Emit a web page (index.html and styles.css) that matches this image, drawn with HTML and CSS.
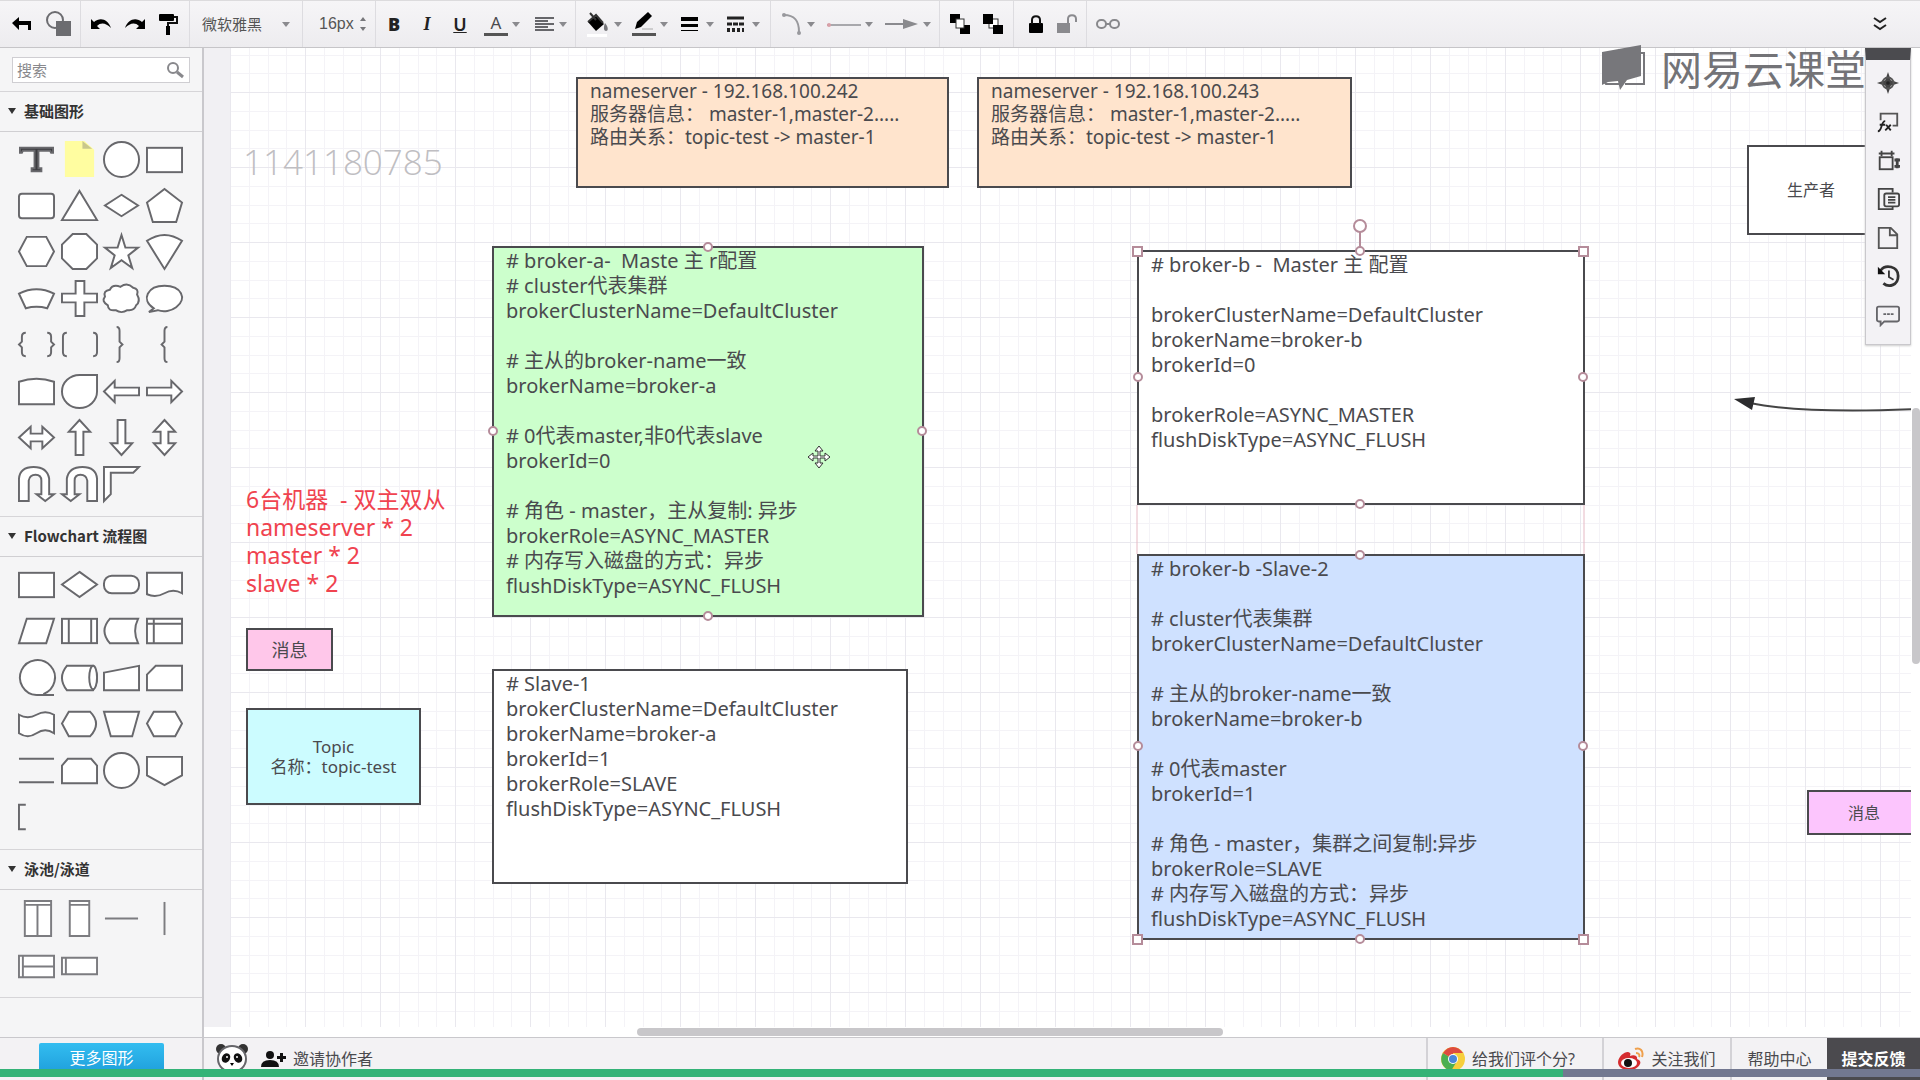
FILE: index.html
```html
<!DOCTYPE html>
<html lang="zh-CN">
<head>
<meta charset="utf-8">
<title>流程图编辑器</title>
<link rel="stylesheet" href="styles.css">
</head>
<body>
<header class="toolbar">
  <div class="group group-file">
    <button aria-label="返回"><svg width="20" height="20" viewBox="0 0 20 20"><path d="M0 9l7-6v4h12v9h-3v-5H7v5z"/></svg></button>
    <button aria-label="图形"><svg width="26" height="26" viewBox="0 0 26 26"><rect x="10" y="10" width="15" height="15" fill="#6c6c70"/><circle cx="9" cy="9" r="8" fill="none" stroke="#6c6c70" stroke-width="2"/></svg></button>
  </div>
  <div class="group group-history">
    <button aria-label="撤销"><svg width="20" height="20" viewBox="0 0 20 20"><path d="M0 5v10h9l-3-3c4-4 9-3 14 2C17 5 9 3 3 8z"/></svg></button>
    <button aria-label="重做"><svg width="20" height="20" viewBox="0 0 20 20"><path d="M20 5v10h-9l3-3C10 8 5 9 0 14 3 5 11 3 17 8z"/></svg></button>
    <button aria-label="格式刷"><svg width="20" height="22" viewBox="0 0 20 22"><rect x="0" y="1" width="15" height="7" rx="1"/><path d="M15 4h3v6H9v3" fill="none" stroke="#111" stroke-width="2"/><rect x="7" y="13" width="4" height="9"/></svg></button>
  </div>
  <div class="group group-font">
    <select aria-label="字体"><option>微软雅黑</option></select>
    <i class="caret"></i>
  </div>
  <div class="group group-size">
    <input aria-label="字号" value="16px">
    <svg width="8" height="16" viewBox="0 0 8 16" fill="#77777b"><path d="M1 5l3-4 3 4zM1 11l3 4 3-4z"/></svg>
  </div>
  <div class="group group-text">
    <button class="glyph bold" aria-label="加粗">B</button>
    <button class="glyph italic" aria-label="倾斜">I</button>
    <button class="glyph under" aria-label="下划线">U</button>
    <button class="drop" aria-label="文字颜色"><span class="letter">A</span><i class="caret"></i></button>
    <button class="drop" aria-label="对齐"><svg width="20" height="16" viewBox="0 0 20 16" stroke="#66666a" stroke-width="2"><path d="M0 2h19M0 5h13M0 8h19M0 11h13M0 14h19"/></svg><i class="caret"></i></button>
  </div>
  <div class="group group-line">
    <button class="drop" aria-label="填充"><svg width="24" height="26" viewBox="0 0 24 26"><path d="M2 11l8-6 8 8-8 7z"/><path d="M2 11L10 4l7 8M4 2l6 7" fill="none" stroke="#333" stroke-width="2"/><path d="M19 12c4 5 3 8 1 8s-3-3-1-8z" fill="#77777b"/><path d="M1 23h20v3H1z" fill="#fff"/></svg><i class="caret"></i></button>
    <button class="drop" aria-label="线条颜色"><svg width="24" height="26" viewBox="0 0 24 26"><path d="M3 18l2-7L16 1l4 4L9 16z"/><path d="M10 18h11" stroke="#aaa"/><path d="M0 22h24v3H0z" fill="#555"/></svg><i class="caret"></i></button>
    <button class="drop" aria-label="线宽"><svg width="24" height="18" viewBox="0 0 24 18"><path d="M3 2h17v4H3zM3 9h17v3H3zM3 15h17v1H3z"/></svg><i class="caret"></i></button>
    <button class="drop" aria-label="线型"><svg width="24" height="18" viewBox="0 0 24 18" stroke="#222" fill="none"><path d="M3 3h17" stroke-width="3"/><path d="M3 9h17" stroke-width="3" stroke-dasharray="5 1"/><path d="M3 15h17" stroke-width="4" stroke-dasharray="3 2"/></svg><i class="caret"></i></button>
  </div>
  <div class="group group-link">
    <button class="drop" aria-label="连线类型" disabled><svg width="22" height="24" viewBox="0 0 22 24" fill="#99999d"><path d="M3 3C14 3 18 9 18 20" fill="none" stroke="#99999d" stroke-width="2"/><circle cx="3" cy="3" r="2"/><circle cx="18" cy="21" r="2"/></svg><i class="caret"></i></button>
    <button class="drop" aria-label="起点" disabled><svg width="34" height="8" viewBox="0 0 34 8"><path d="M0 5h34" stroke="#a8a8ac" stroke-width="2"/><circle cx="2" cy="5" r="2" fill="#d9a0a8"/></svg><i class="caret"></i></button>
    <button class="drop" aria-label="终点" disabled><svg width="34" height="12" viewBox="0 0 34 12" fill="#8a8a8e"><path d="M0 6h20" stroke="#8a8a8e" stroke-width="2"/><path d="M18 1l15 5-15 5z"/></svg><i class="caret"></i></button>
  </div>
  <div class="group group-layer">
    <button aria-label="置于顶层"><svg width="20" height="22" viewBox="0 0 20 22"><path d="M0 1h10v9H0zM10 12h10v9H10z"/><rect x="6" y="6" width="8" height="9" fill="#fff" stroke="#333"/></svg></button>
    <button aria-label="置于底层"><svg width="20" height="22" viewBox="0 0 20 22"><rect x="6" y="6" width="9" height="9" fill="#fff" stroke="#333"/><path d="M0 1h10v10H0zM10 12h10v9H10z"/></svg></button>
  </div>
  <div class="group group-lock">
    <button aria-label="锁定"><svg width="16" height="20" viewBox="0 0 16 20"><rect x="1" y="9" width="14" height="10" rx="1"/><path d="M4 10V6c0-5 8-5 8 0v4" fill="none" stroke="#111" stroke-width="2"/></svg></button>
    <button aria-label="解锁" disabled><svg width="22" height="20" viewBox="0 0 22 20"><rect x="1" y="9" width="13" height="10" fill="#8a8a8e"/><path d="M12 10V5c0-5 8-5 8 0v3" fill="none" stroke="#8a8a8e" stroke-width="2"/></svg></button>
  </div>
  <div class="group group-chain">
    <button aria-label="链接"><svg width="24" height="12" viewBox="0 0 24 12" fill="none" stroke="#88888c" stroke-width="2"><rect x="1" y="2" width="9" height="8" rx="4"/><rect x="14" y="2" width="9" height="8" rx="4"/><path d="M9 6h6"/></svg></button>
  </div>
  <button class="collapse" aria-label="收起"><svg width="14" height="16" viewBox="0 0 14 16" fill="none" stroke="#222" stroke-width="2"><path d="M1 2l6 4 6-4M1 9l6 4 6-4"/></svg></button>
</header>

<main class="main">
  <aside class="sidebar">
    <div class="search">
      <input type="text" placeholder="搜索" aria-label="搜索">
      <svg width="18" height="18" viewBox="0 0 18 18" fill="none" stroke="#88888c"><circle cx="7" cy="7" r="5" stroke-width="2"/><path d="M11 11l6 5" stroke-width="3"/></svg>
    </div>
    <h2 class="section-title"><i class="fold"></i>基础图形</h2>
    <div class="shapes shapes-basic">
      <button aria-label="文本"><svg viewBox="0 0 38 38"><path d="M2 7h34v5h-2l-1-2H21v18h3v3H14v-3h3V10H5l-1 2H2z" fill="#3c3c40"/></svg></button>
      <button aria-label="便签"><svg class="sticky" viewBox="0 0 38 38"><path d="M4 0h20l10 9v28H4z" fill="#fffda0"/><path d="M22 0l10 8H22z" fill="#c9c78c"/></svg></button>
      <button aria-label="圆形"><svg viewBox="0 0 38 38"><circle cx="19" cy="19" r="18"/></svg></button>
      <button aria-label="矩形"><svg viewBox="0 0 38 38"><rect x="1" y="7" width="36" height="25"/></svg></button>
      <button aria-label="圆角矩形"><svg viewBox="0 0 38 38"><rect x="1" y="7" width="36" height="25" rx="3"/></svg></button>
      <button aria-label="三角形"><svg viewBox="0 0 38 38"><path d="M19 4l18 30H1z"/></svg></button>
      <button aria-label="菱形"><svg viewBox="0 0 38 38"><path d="M19 8l17 11-17 11L2 19z"/></svg></button>
      <button aria-label="五边形"><svg viewBox="0 0 38 38"><path d="M19 2l18 14-6 20H7L1 16z"/></svg></button>
      <button aria-label="六边形"><svg viewBox="0 0 38 38"><path d="M9 4h20l8 15-8 15H9L1 19z"/></svg></button>
      <button aria-label="八边形"><svg viewBox="0 0 38 38"><path d="M12 1h14l11 11v14L26 37H12L1 26V12z"/></svg></button>
      <button aria-label="星形"><svg viewBox="0 0 38 38"><path d="M19 2l4 13h13L26 23l4 13-11-8-11 8 4-13L2 15h13z"/></svg></button>
      <button aria-label="扇形"><svg viewBox="0 0 38 38"><path d="M1 8Q19-4 37 8L19 37z"/></svg></button>
      <button aria-label="弧形"><svg viewBox="0 0 38 38"><path d="M1 14Q19 5 37 14l-7 15q-11-3-22 0z"/></svg></button>
      <button aria-label="十字"><svg viewBox="0 0 38 38"><path d="M15 1h9v13h13v9H24v14h-9V23H1v-9h14z"/></svg></button>
      <button aria-label="云"><svg viewBox="0 0 38 38"><path d="M7 10q3-6 11-3 7-5 13 1 6 1 4 7 4 7-1 11-2 6-9 5-6 4-12 0-8 1-8-5-7-4-3-9-2-6 5-7z"/></svg></button>
      <button aria-label="对话"><svg viewBox="0 0 38 38"><path d="M8 29C-6 20 2 6 19 6s24 13 12 22c-5 4-13 5-19 3l-9 2z"/></svg></button>
      <button aria-label="大括号"><svg class="open" viewBox="0 0 38 38"><path d="M8 7q-4 0-4 4v5l-3 3 3 3v5q0 4 4 4M30 7q4 0 4 4v5l3 3-3 3v5q0 4-4 4"/></svg></button>
      <button aria-label="中括号"><svg class="open" viewBox="0 0 38 38"><path d="M6 7q-4 0-4 4v16q0 4 4 4M33 7q4 0 4 4v16q0 4-4 4"/></svg></button>
      <button aria-label="右大括号"><svg class="open" viewBox="0 0 38 38"><path d="M14 1q3 0 3 4v11l3 3-3 3v11q0 4-3 4"/></svg></button>
      <button aria-label="左大括号"><svg class="open" viewBox="0 0 38 38"><path d="M22 1q-3 0-3 4v11l-3 3 3 3v11q0 4 3 4"/></svg></button>
      <button aria-label="拱形"><svg viewBox="0 0 38 38"><path d="M1 9Q19 3 37 9v23H1z"/></svg></button>
      <button aria-label="水滴"><svg viewBox="0 0 38 38"><path d="M19 2h18v17A18 17 0 1 1 19 2z"/></svg></button>
      <button aria-label="左箭头"><svg viewBox="0 0 38 38"><path d="M1 19L12 8v7h25v8H12v7z"/></svg></button>
      <button aria-label="右箭头"><svg viewBox="0 0 38 38"><path d="M37 19L26 8v7H1v8h25v7z"/></svg></button>
      <button aria-label="左右箭头"><svg viewBox="0 0 38 38"><path d="M1 19L13 8v7h12V8l12 11-12 11v-7H13v7z"/></svg></button>
      <button aria-label="上箭头"><svg viewBox="0 0 38 38"><path d="M19 1l11 12h-7v24h-8V13H8z"/></svg></button>
      <button aria-label="下箭头"><svg viewBox="0 0 38 38"><path d="M19 37L8 25h7V1h8v24h7z"/></svg></button>
      <button aria-label="上下箭头"><svg viewBox="0 0 38 38"><path d="M19 1l11 12h-7v12h7L19 37 8 25h7V13H8z"/></svg></button>
      <button aria-label="右转箭头"><svg viewBox="0 0 38 38"><path d="M1 37V14Q2 2 16 2t16 12v16h5l-9 7-9-7h5V16q0-6-6-6t-7 6v21z"/></svg></button>
      <button aria-label="左转箭头"><svg viewBox="0 0 38 38"><path d="M37 37V14Q36 2 22 2T6 14v16H1l9 7 9-7h-5V16q0-6 6-6t7 6v21z"/></svg></button>
      <button aria-label="折角"><svg viewBox="0 0 38 38"><path d="M1 2h36l-6 6H8v22l-7 7z"/></svg></button>
    </div>
    <h2 class="section-title"><i class="fold"></i>Flowchart 流程图</h2>
    <div class="shapes shapes-flow">
      <button aria-label="流程"><svg viewBox="0 0 38 38"><rect x="1" y="7" width="36" height="25"/></svg></button>
      <button aria-label="判定"><svg viewBox="0 0 38 38"><path d="M19 6l18 13-18 13L1 19z"/></svg></button>
      <button aria-label="开始"><svg viewBox="0 0 38 38"><rect x="1" y="10" width="36" height="18" rx="8"/></svg></button>
      <button aria-label="文档"><svg viewBox="0 0 38 38"><path d="M1 7h36v21q-9-5-18 0t-18 1z"/></svg></button>
      <button aria-label="数据"><svg viewBox="0 0 38 38"><path d="M9 7h28l-8 25H1z"/></svg></button>
      <button aria-label="子流程"><svg viewBox="0 0 38 38"><rect x="1" y="7" width="36" height="25"/><path d="M8 7v25M31 7v25"/></svg></button>
      <button aria-label="外部数据"><svg viewBox="0 0 38 38"><path d="M7 7h29q-6 12 0 25H7Q-4 19 7 7z"/></svg></button>
      <button aria-label="内部存储"><svg viewBox="0 0 38 38"><path d="M1 7h36v25H1zM1 12h36M8 7v25"/></svg></button>
      <button aria-label="队列数据"><svg viewBox="0 0 38 38"><path d="M19 37h18M19 37A18 18 0 1 1 26 36"/></svg></button>
      <button aria-label="数据库"><svg viewBox="0 0 38 38"><path d="M6 7h27q8 12 0 25H6Q-4 19 6 7z"/><ellipse cx="33" cy="19" rx="4" ry="12"/></svg></button>
      <button aria-label="人工输入"><svg viewBox="0 0 38 38"><path d="M1 14l36-7v25H1z"/></svg></button>
      <button aria-label="卡片"><svg viewBox="0 0 38 38"><path d="M10 7h27v25H1V16z"/></svg></button>
      <button aria-label="条带"><svg viewBox="0 0 38 38"><path d="M1 10q9 5 18 0t18 0v19q-9-6-18 0t-18 0z"/></svg></button>
      <button aria-label="展示内容"><svg viewBox="0 0 38 38"><path d="M8 7h22q12 12 0 25H8L1 19z"/></svg></button>
      <button aria-label="人工操作"><svg viewBox="0 0 38 38"><path d="M1 7h36l-7 25H8z"/></svg></button>
      <button aria-label="预备"><svg viewBox="0 0 38 38"><path d="M8 7h22l7 12-7 13H8L1 19z"/></svg></button>
      <button aria-label="并行模式"><svg class="open" viewBox="0 0 38 38"><path d="M1 7h36M1 31h36"/></svg></button>
      <button aria-label="循环界限"><svg viewBox="0 0 38 38"><path d="M7 7h24l6 7v18H1V14z"/></svg></button>
      <button aria-label="页面内引用"><svg viewBox="0 0 38 38"><circle cx="19" cy="19" r="18"/></svg></button>
      <button aria-label="跨页引用"><svg viewBox="0 0 38 38"><path d="M1 5h36v19L19 34 1 24z"/></svg></button>
      <button aria-label="注释"><svg class="open" viewBox="0 0 38 38"><path d="M8 7H1v25h7"/></svg></button>
    </div>
    <h2 class="section-title"><i class="fold"></i>泳池/泳道</h2>
    <div class="shapes shapes-lane">
      <button aria-label="垂直泳池"><svg viewBox="0 0 38 38"><path d="M7 1h27v36H7zM7 5h27M20 5v32"/></svg></button>
      <button aria-label="垂直泳道"><svg viewBox="0 0 38 38"><path d="M9 1h20v36H9zM9 5h20"/></svg></button>
      <button aria-label="水平分隔"><svg class="open" viewBox="0 0 38 38"><path d="M2 19h34"/></svg></button>
      <button aria-label="垂直分隔"><svg class="open" viewBox="0 0 38 38"><path d="M19 2v34"/></svg></button>
      <button aria-label="水平泳池"><svg viewBox="0 0 38 38"><path d="M1 8h36v22H1zM5 8v22M5 19h32"/></svg></button>
      <button aria-label="水平泳道"><svg viewBox="0 0 38 38"><path d="M1 10h36v17H1zM5 10v17"/></svg></button>
    </div>
  </aside>

  <section class="workspace">
    <div class="sheet">
      <div class="node server ns1">nameserver - 192.168.100.242
服务器信息： master-1,master-2.....
路由关系：topic-test -&gt; master-1</div>
      <div class="node server ns2">nameserver - 192.168.100.243
服务器信息： master-1,master-2.....
路由关系：topic-test -&gt; master-1</div>
      <div class="node broker broker-a"># broker-a-  Maste 主 r配置
# cluster代表集群
brokerClusterName=DefaultCluster

# 主从的broker-name一致
brokerName=broker-a

# 0代表master,非0代表slave
brokerId=0

# 角色 - master，主从复制: 异步
brokerRole=ASYNC_MASTER
# 内存写入磁盘的方式：异步
flushDiskType=ASYNC_FLUSH</div>
      <div class="node broker slave-a"># Slave-1
brokerClusterName=DefaultCluster
brokerName=broker-a
brokerId=1
brokerRole=SLAVE
flushDiskType=ASYNC_FLUSH</div>
      <div class="node broker broker-b"># broker-b -  Master 主 配置

brokerClusterName=DefaultCluster
brokerName=broker-b
brokerId=0

brokerRole=ASYNC_MASTER
flushDiskType=ASYNC_FLUSH</div>
      <div class="node broker slave-b"># broker-b -Slave-2

# cluster代表集群
brokerClusterName=DefaultCluster

# 主从的broker-name一致
brokerName=broker-b

# 0代表master
brokerId=1

# 角色 - master，集群之间复制:异步
brokerRole=SLAVE
# 内存写入磁盘的方式：异步
flushDiskType=ASYNC_FLUSH</div>
      <div class="note">6台机器  - 双主双从
nameserver * 2
master * 2
slave * 2</div>
      <div class="node small message">消息</div>
      <div class="node small topic">Topic
名称：topic-test</div>
      <div class="node small producer">生产者</div>
      <div class="node small outgoing">消息</div>
      <div class="user-id">1141180785</div>
      <svg class="overlay">
        <path d="M1520 355Q1572 366 1690 361" fill="none" stroke="#444" stroke-width="2"/>
        <path d="M1504 351l21-2-3 13z" fill="#2c2c2e"/>
        <path d="M907 457v49M1354 457v49" fill="none" stroke="#e6b9c4"/>
        <g fill="#fff" stroke="#b58c9a" stroke-width="2">
          <path d="M1130 184v15"/>
          <circle cx="1130" cy="178" r="6"/>
          <circle cx="478" cy="199" r="4"/><circle cx="263" cy="383" r="4"/><circle cx="692" cy="383" r="4"/><circle cx="478" cy="568" r="4"/>
          <circle cx="1130" cy="203" r="4"/><circle cx="908" cy="329" r="4"/><circle cx="1353" cy="329" r="4"/><circle cx="1130" cy="456" r="4"/>
          <circle cx="1130" cy="507" r="4"/><circle cx="908" cy="698" r="4"/><circle cx="1353" cy="698" r="4"/><circle cx="1130" cy="891" r="4"/>
          <rect x="903" y="199" width="9" height="9"/><rect x="1349" y="199" width="9" height="9"/>
          <rect x="903" y="887" width="9" height="9"/><rect x="1349" y="887" width="9" height="9"/>
        </g>
        <path d="M589 398l4 5h-3v5h5v-3l5 4-5 4v-3h-5v5h3l-4 5-4-5h3v-5h-5v3l-5-4 5-4v3h5v-5h-3z" fill="#fff" stroke="#333"/>
      </svg>
    </div>
    <div class="scroll-y"></div>
    <div class="scroll-x"></div>
    <div class="brand">
      <svg width="46" height="46" viewBox="0 0 46 46"><path d="M36 9h7v31H24M3 37l2 3h16" fill="none" stroke="#77777b" stroke-width="2"/><path d="M1 8L40 1v31l-14 4-7 10-2-9-10 1-6 3z" fill="#77777b"/></svg>
      <span>网易云课堂</span>
    </div>
    <nav class="dock">
      <button aria-label="导航"><svg viewBox="0 0 26 26"><path d="M13 1l3 9 9 3-9 3-3 9-3-9-9-3 9-3z" fill="#444"/><circle cx="13" cy="13" r="6" fill="none" stroke="#555" stroke-width="2"/><circle cx="13" cy="13" r="2" fill="#222"/></svg></button>
      <button aria-label="公式"><svg viewBox="0 0 26 26" fill="none" stroke="#555" stroke-width="2"><path d="M5 11V4h18v13h-5"/><path d="M2 23c5 0 3-11 8-11M4 16h6M11 16l5 6M16 16l-6 6" stroke="#222"/></svg></button>
      <button aria-label="度量"><svg viewBox="0 0 26 26" fill="none" stroke="#444" stroke-width="2"><rect x="4" y="10" width="14" height="13"/><path d="M6 3v6M17 3v6M3 6h17"/><path d="M20 13h6M20 20h6M23 11v11" stroke-width="3"/></svg></button>
      <button aria-label="图形"><svg viewBox="0 0 26 26" fill="none" stroke="#444" stroke-width="2"><path d="M18 6V2H3v22h15v-3"/><rect x="9" y="7" width="16" height="14" rx="2"/><path d="M13 11h8M13 14h8M13 17h8"/></svg></button>
      <button aria-label="页面"><svg viewBox="0 0 26 26" fill="none" stroke="#555" stroke-width="2"><path d="M3 2h13l7 7v15H3zM15 2v8h8"/></svg></button>
      <button aria-label="历史"><svg viewBox="0 0 26 26" fill="none" stroke="#333" stroke-width="3"><path d="M5 7c5-7 19-5 19 6 0 10-10 13-16 8"/><path d="M2 3v8h8z" fill="#111" stroke="none"/><path d="M14 7v7l5 3" stroke-width="2"/></svg></button>
      <button aria-label="评论"><svg viewBox="0 0 26 26" fill="none" stroke="#66666a" stroke-width="2"><path d="M3 4h20q2 0 2 2v12q0 2-2 2H9l-4 4v-4H3q-2 0-2-2V6q0-2 2-2z"/><path d="M8 12h11" stroke-dasharray="3 1"/></svg></button>
    </nav>
  </section>
</main>

<footer class="footer">
  <div class="footer-side"><button class="more">更多图形</button></div>
  <a class="invite" href="#">
    <svg width="32" height="30" viewBox="0 0 32 30"><circle cx="5" cy="5" r="5" fill="#333"/><circle cx="27" cy="5" r="5" fill="#333"/><ellipse cx="16" cy="15" rx="14" ry="13" fill="#fff" stroke="#66666a" stroke-width="2"/><ellipse cx="10" cy="14" rx="4" ry="5" fill="#111" transform="rotate(30 10 14)"/><ellipse cx="22" cy="14" rx="4" ry="5" fill="#111" transform="rotate(-30 22 14)"/><circle cx="11" cy="13" r="1" fill="#fff"/><circle cx="21" cy="13" r="1" fill="#fff"/><path d="M14 19h4l-2 3z"/></svg>
    <svg class="people" width="26" height="18" viewBox="0 0 26 18"><circle cx="9" cy="5" r="4"/><path d="M0 17q0-7 9-7t9 7zM19 3h3v3h3v3h-3v3h-3V9h-3V6h3z"/></svg>
    <span>邀请协作者</span>
  </a>
  <a class="foot-link rate" href="#"><svg width="24" height="24" viewBox="0 0 24 24"><circle cx="12" cy="12" r="12" fill="#f7cf3c"/><path d="M12 12L2 6a12 12 0 0 0 8 18l6-10z" fill="#4caf50"/><path d="M12 12L2 6q4-6 10-6t10 6H12z" fill="#de4b3f"/><circle cx="12" cy="12" r="5" fill="#fff"/><circle cx="12" cy="12" r="4" fill="#4a86d8"/></svg>给我们评个分?</a>
  <a class="foot-link weibo" href="#"><svg width="26" height="24" viewBox="0 0 26 24"><path d="M0 15C1 8 9 3 12 6c1 1 0 2 0 3 4-2 8 0 7 3 3 1 4 3 3 5-4 9-22 8-22-2z" fill="#d52c2f"/><ellipse cx="11" cy="16" rx="8" ry="5" fill="#fff"/><circle cx="10" cy="16" r="4" fill="#111"/><path d="M17 2c5-2 9 2 7 8M18 6c3 0 4 2 3 4" fill="none" stroke="#efa04c" stroke-width="2"/></svg>关注我们</a>
  <a class="foot-link help" href="#">帮助中心</a>
  <a class="foot-link feedback" href="#">提交反馈</a>
  <div class="progress"><div class="played"></div></div>
</footer>
</body>
</html>
```
FILE: styles.css
```css
* { box-sizing: border-box; }

body {
  margin: 0;
  height: 100vh;
  display: flex;
  flex-direction: column;
  overflow: hidden;
  background: #fff;
  color: #4a4a4e;
  font: 16px/20px "Noto Sans", "Noto Sans CJK SC", sans-serif;
}

button {
  padding: 0;
  border: 0;
  background: none;
  font: inherit;
  color: inherit;
  display: flex;
  align-items: center;
  justify-content: center;
}

h2 { margin: 0; }
a { color: inherit; text-decoration: none; }
svg { display: block; flex: none; }

/* Toolbar */
.toolbar {
  flex: none;
  height: 48px;
  display: flex;
  background: linear-gradient(#f6f5f7, #edecef);
  border-top: 1px solid #dcdbdd;
  border-bottom: 1px solid #c6c5c8;
}
.group {
  display: flex;
  align-items: center;
  border-right: 1px solid #dddce0;
}
.group-file { padding: 0 8px 0 12px; gap: 14px; }
.group-history { padding: 0 10px; gap: 14px; }
.group-font { width: 113px; padding: 0 12px; }
.group-size { width: 73px; padding: 0 8px 0 16px; }
.group-text { padding: 0 8px 0 9px; gap: 15px; }
.group-line { padding: 0 10px; gap: 10px; }
.group-link { padding: 0 8px 0 10px; gap: 12px; }
.group-layer { padding: 0 10px; gap: 13px; }
.group-lock { padding: 0 8px 0 14px; gap: 12px; }
.group-chain { padding: 0 9px; border: 0; }
.group-font, .group-size { justify-content: space-between; }
.caret {
  width: 8px;
  border: 4px solid transparent;
  border-top: 5px solid #8a8a8e;
  border-bottom: 0;
}
.toolbar select {
  appearance: none;
  border: 0;
  padding: 0;
  background: none;
  color: #555;
  font: 15px/20px "Noto Sans CJK SC", sans-serif;
}
.group-size input {
  width: 36px;
  border: 0;
  padding: 0;
  background: none;
  color: #555;
  font: 16px/20px "Liberation Sans", sans-serif;
}
.glyph { width: 18px; font-size: 18px; color: #222; }
.bold { font-weight: 900; }
.italic { font-family: "Liberation Serif", serif; font-style: italic; font-weight: 700; }
.under { text-decoration: underline; font-weight: 600; }
.drop { gap: 4px; }
.letter { width: 24px; font-size: 17px; border-bottom: 3px solid #555; }
.collapse { margin: 0 33px 0 auto; }

/* Shape library */
.main { flex: 1; min-height: 0; display: flex; }
.sidebar {
  flex: none;
  width: 204px;
  background: #f5f5f6;
  border-right: 2px solid #c9c8cc;
}
.search {
  height: 26px;
  margin: 9px 12px 8px 12px;
  padding: 0 5px 0 4px;
  display: flex;
  align-items: center;
  background: #fff;
  border: 1px solid #cfced2;
}
.search input {
  flex: 1;
  min-width: 0;
  border: 0;
  padding: 0;
  background: none;
  font: 15px/20px "Noto Sans CJK SC", sans-serif;
}
.search input::placeholder { color: #88888c; }
.section-title {
  height: 41px;
  padding: 0 0 2px 8px;
  display: flex;
  align-items: center;
  gap: 8px;
  border-top: 1px solid #d6d5d8;
  border-bottom: 1px solid #d0cfd2;
  font: 700 15px/20px "Noto Sans CJK SC", sans-serif;
  color: #333;
}
.fold {
  width: 8px;
  border: 4px solid transparent;
  border-top: 6px solid #333;
  border-bottom: 0;
}
.shapes {
  display: grid;
  grid-template-columns: repeat(4, 1fr);
  grid-auto-rows: 1fr;
  margin: 4px 16px 9px 15px;
}
.shapes svg {
  width: 37px;
  height: 37px;
  overflow: visible;
  fill: #fff;
  stroke: #68686c;
  stroke-width: 2px;
}
.shapes svg.open { fill: none; }
.shapes svg.sticky { stroke: none; }
.shapes-basic { height: 371px; }
.shapes-flow { height: 279px; }
.shapes-lane { height: 96px; margin-bottom: 7px; }
.shapes-lane svg { stroke: #7c7c80; }
.sidebar::after {
  content: "";
  display: block;
  border-top: 1px solid #d6d5d8;
}

/* Canvas */
.workspace {
  flex: 1;
  min-width: 0;
  position: relative;
  display: grid;
  grid-template-columns: 1fr 9px;
  grid-template-rows: 1fr 10px;
}
.sheet {
  position: relative;
  overflow: hidden;
  margin-left: 26px;
  box-shadow: -26px 0 #f1f0f3;
  background-color: #fff;
  background-image:
    linear-gradient(to right, #e9e8ee 1px, transparent 1px),
    linear-gradient(to bottom, #e9e8ee 1px, transparent 1px),
    linear-gradient(to right, transparent 19px, #f4f3f7 19px 20px, transparent 20px 38px, #f4f3f7 38px 39px, transparent 39px 56px, #f4f3f7 56px 57px, transparent 57px),
    linear-gradient(to bottom, transparent 19px, #f4f3f7 19px 20px, transparent 20px 38px, #f4f3f7 38px 39px, transparent 39px 56px, #f4f3f7 56px 57px, transparent 57px);
  background-size: 75px 75px;
  background-position: 75px 44px;
}
.scroll-y {
  margin: 360px 0 0 1px;
  height: 256px;
  border-radius: 4px;
  background: #c8c7ca;
}
.scroll-x {
  margin: 1px 0 1px 433px;
  width: 586px;
  border-radius: 4px;
  background: #c8c7ca;
}

.node {
  position: absolute;
  border: 2px solid #4a4a4e;
  background: #fff;
  white-space: pre;
}
.server {
  top: 29px;
  height: 111px;
  padding: 1px 0 0 12px;
  background: #ffe4cd;
  font-size: 19px;
  line-height: 23px;
}
.ns1 { left: 346px; width: 373px; }
.ns2 { left: 747px; width: 375px; }
.broker { padding-left: 12px; font-size: 20px; line-height: 25px; }
.broker-a { left: 262px; top: 198px; width: 432px; height: 371px; background: #ccffcc; }
.slave-a { left: 262px; top: 621px; width: 416px; height: 215px; }
.broker-b { left: 907px; top: 202px; width: 448px; height: 255px; }
.slave-b { left: 907px; top: 506px; width: 448px; height: 386px; background: #cfe1ff; }
.small {
  display: flex;
  align-items: center;
  justify-content: center;
  text-align: center;
}
.message { left: 16px; top: 580px; width: 87px; height: 43px; background: #ffc7ea; font-size: 18px; }
.topic { left: 16px; top: 660px; width: 175px; height: 97px; background: #ccfcff; font-size: 17px; }
.producer { left: 1517px; top: 97px; width: 128px; height: 90px; }
.outgoing { left: 1577px; top: 742px; width: 114px; height: 45px; background: #fcc5fd; }
.note {
  position: absolute;
  left: 16px;
  top: 437px;
  white-space: pre;
  color: #f0434f;
  font-size: 23px;
  line-height: 28px;
}
.user-id {
  position: absolute;
  left: 13px;
  top: 94px;
  color: #bfbec2;
  font: 300 35px/40px "Open Sans", sans-serif;
}
.overlay { position: absolute; inset: 0; width: 100%; height: 100%; }

/* Course brand laid over the canvas */
.brand {
  position: absolute;
  top: -4px;
  right: 54px;
  display: flex;
  align-items: center;
  gap: 14px;
  color: #737377;
  font: 400 41px/42px "Noto Sans CJK SC", sans-serif;
}

/* Floating dock */
.dock {
  position: absolute;
  top: 0;
  right: 9px;
  width: 46px;
  height: 297px;
  padding: 4px 0 10px;
  display: grid;
  grid-auto-rows: 1fr;
  background: #f3f2f5;
  border: 1px solid #c9c8cc;
  border-top: 12px solid #4b4b4f;
  box-shadow: 0 1px 2px #ccc;
}
.dock svg { width: 24px; height: 24px; }

/* Footer */
.footer {
  flex: none;
  position: relative;
  height: 43px;
  display: flex;
  background: #f3f2f4;
  border-top: 1px solid #c9c8cc;
}
.footer-side {
  width: 204px;
  padding: 5px 0 0 39px;
  border-right: 2px solid #c9c8cc;
}
.more {
  width: 125px;
  height: 30px;
  background: linear-gradient(#33bdf0, #1f9fdc);
  color: #fff;
  border-radius: 2px;
}
.invite {
  display: flex;
  align-items: center;
  padding-left: 12px;
  margin-right: auto;
}
.people { margin: 0 6px 0 13px; fill: #111; }
.foot-link {
  display: flex;
  align-items: center;
  justify-content: center;
  gap: 7px;
  border-left: 2px solid #d3d2d6;
}
.rate { width: 176px; justify-content: flex-start; padding-left: 13px; }
.weibo { width: 128px; }
.help { width: 97px; }
.feedback { width: 93px; border: 0; background: #4b4a4e; color: #fff; font-weight: 700; }
.progress {
  position: absolute;
  left: 0;
  right: 0;
  bottom: 3px;
  height: 8px;
  background: #727890;
}
.played { width: 1563px; max-width: 100%; height: 100%; background: #34b377; }
```
